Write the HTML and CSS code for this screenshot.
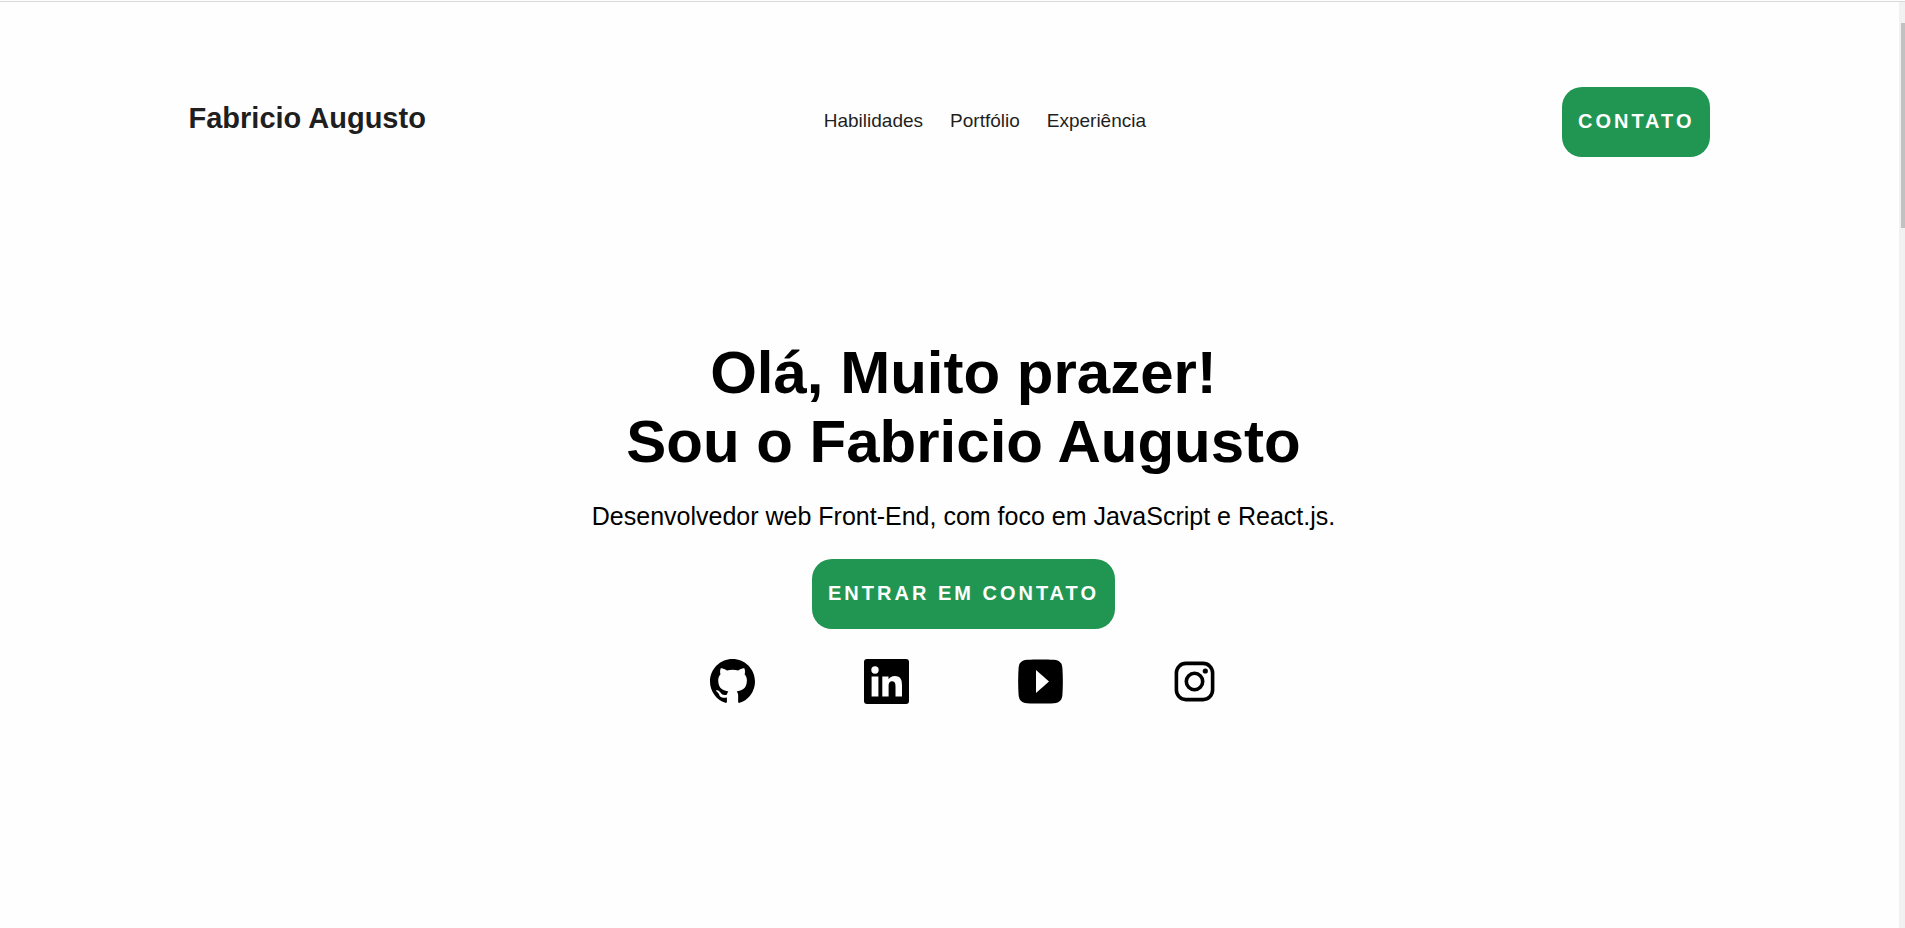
FILE: index.html
```html
<!DOCTYPE html>
<html lang="pt-BR">
<head>
<meta charset="utf-8">
<meta name="viewport" content="width=device-width, initial-scale=1">
<title>Fabricio Augusto</title>
<link rel="stylesheet" href="styles.css">
</head>
<body>
<div class="page">
  <header class="header">
    <div class="brand">Fabricio Augusto</div>
    <nav class="nav">
      <a href="#habilidades">Habilidades</a>
      <a href="#portfolio">Portfólio</a>
      <a href="#experiencia">Experiência</a>
    </nav>
    <button class="button" type="button">CONTATO</button>
  </header>
  <main class="hero">
    <h1 class="title">Olá, Muito prazer!<br>Sou o Fabricio Augusto</h1>
    <p class="subtitle">Desenvolvedor web Front-End, com foco em JavaScript e React.js.</p>
    <button class="button" type="button">ENTRAR EM CONTATO</button>
    <div class="social">
      <a href="#github" aria-label="GitHub">
        <svg viewBox="0 0 16 16"><path d="M8 0C3.58 0 0 3.58 0 8c0 3.54 2.29 6.53 5.47 7.59.4.07.55-.17.55-.38 0-.19-.01-.82-.01-1.49-2.01.37-2.53-.49-2.69-.94-.09-.23-.48-.94-.82-1.13-.28-.15-.68-.52-.01-.53.63-.01 1.08.58 1.23.82.72 1.21 1.87.87 2.33.66.07-.52.28-.87.51-1.07-1.78-.2-3.64-.89-3.64-3.95 0-.87.31-1.59.82-2.15-.08-.2-.36-1.02.08-2.12 0 0 .67-.21 2.2.82.64-.18 1.32-.27 2-.27s1.36.09 2 .27c1.53-1.04 2.2-.82 2.2-.82.44 1.1.16 1.92.08 2.12.51.56.82 1.27.82 2.15 0 3.07-1.87 3.75-3.65 3.95.29.25.54.73.54 1.48 0 1.07-.01 1.93-.01 2.2 0 .21.15.46.55.38A8.01 8.01 0 0 0 16 8c0-4.42-3.58-8-8-8z"/></svg>
      </a>
      <a href="#linkedin" aria-label="LinkedIn">
        <svg viewBox="0 0 45 45"><rect width="45" height="45" rx="3"/><g fill="#fefefe"><circle cx="11" cy="11" r="3.700"/><path d="M7.600 17.500h6.800V37.500H7.600zM18.300 17.500h6.200v2.800c1.200-2 3.400-3.300 6.300-3.300 6 0 7.200 4 7.200 9.300V37.500h-6.500V27.800c0-2.700-.3-5.500-3.300-5.500-3.100 0-3.600 2.500-3.600 5.300v9.900h-6.300z"/></g></svg>
      </a>
      <a href="#youtube" aria-label="YouTube">
        <svg viewBox="0 0 45 45"><path d="M9 .8C17 .3 28 .3 36 .8 41.500 1.200 44 4 44.400 9 45 18 45 27 44.400 36 44 41 41.500 43.800 36 44.200 28 44.700 17 44.700 9 44.200 3.500 43.800 1 41 .6 36 0 27 0 18 .6 9 1 4 3.500 1.200 9 .8z"/><path fill="#fefefe" d="M18 11v23l13-11.500z"/></svg>
      </a>
      <a href="#instagram" aria-label="Instagram">
        <svg viewBox="0 0 45 45"><g fill="none" stroke="#000" stroke-width="3.600"><rect x="4.400" y="4.400" width="36.200" height="36.200" rx="9.500"/><circle cx="22.500" cy="22.500" r="8.200"/></g><circle cx="33.300" cy="12" r="2.600"/></svg>
      </a>
    </div>
  </main>
</div>
<div class="scrollbar" aria-hidden="true"><div class="thumb"></div></div>
</body>
</html>
```
FILE: styles.css
```css
* {
  box-sizing: border-box;
}

html {
  height: 100%;
}

body {
  display: flex;
  min-height: 100%;
  margin: 0;
  background: #fefefe linear-gradient(transparent 1px, #d9d9d9 1px, #d9d9d9 2px, transparent 2px);
  color: #000;
  font-family: "Liberation Sans", Arial, sans-serif;
}

.page {
  flex: 1;
  padding: 87px 10% 0;
}

.header {
  display: flex;
  justify-content: space-between;
  height: 70px;
  margin: 0 -2px;
}

.brand {
  padding-top: 14px;
  color: #1f1f1f;
  font-size: 29px;
  font-weight: bold;
  line-height: 34px;
}

.nav {
  display: flex;
  align-items: center;
  gap: 27px;
  padding: 0 18px 2px 0;
}

.nav a {
  color: #1f1f1f;
  font-size: 19px;
  text-decoration: none;
}

.button {
  height: 70px;
  padding: 0 16px 2px;
  border: 0;
  border-radius: 20px;
  background: #219653;
  color: #fff;
  font-family: inherit;
  font-size: 20px;
  font-weight: bold;
  letter-spacing: 3px;
}

.hero {
  display: flex;
  flex-direction: column;
  align-items: center;
  padding: 181px 0 0 28px;
  text-align: center;
}

.title {
  margin: 0;
  font-size: 60px;
  line-height: 69px;
}

.subtitle {
  margin: 26px 0 28px;
  font-size: 25px;
  line-height: 29px;
}

.social {
  display: flex;
  gap: 109px;
  margin-top: 30px;
}

.social a {
  color: #000;
}

.social svg {
  display: block;
  width: 45px;
  height: 45px;
}

.scrollbar {
  width: 6px;
  margin-top: 2px;
  padding: 21px 0 0 2px;
  background: #f1f1f1;
}

.thumb {
  height: 205px;
  background: #c1c1c1;
}
```
